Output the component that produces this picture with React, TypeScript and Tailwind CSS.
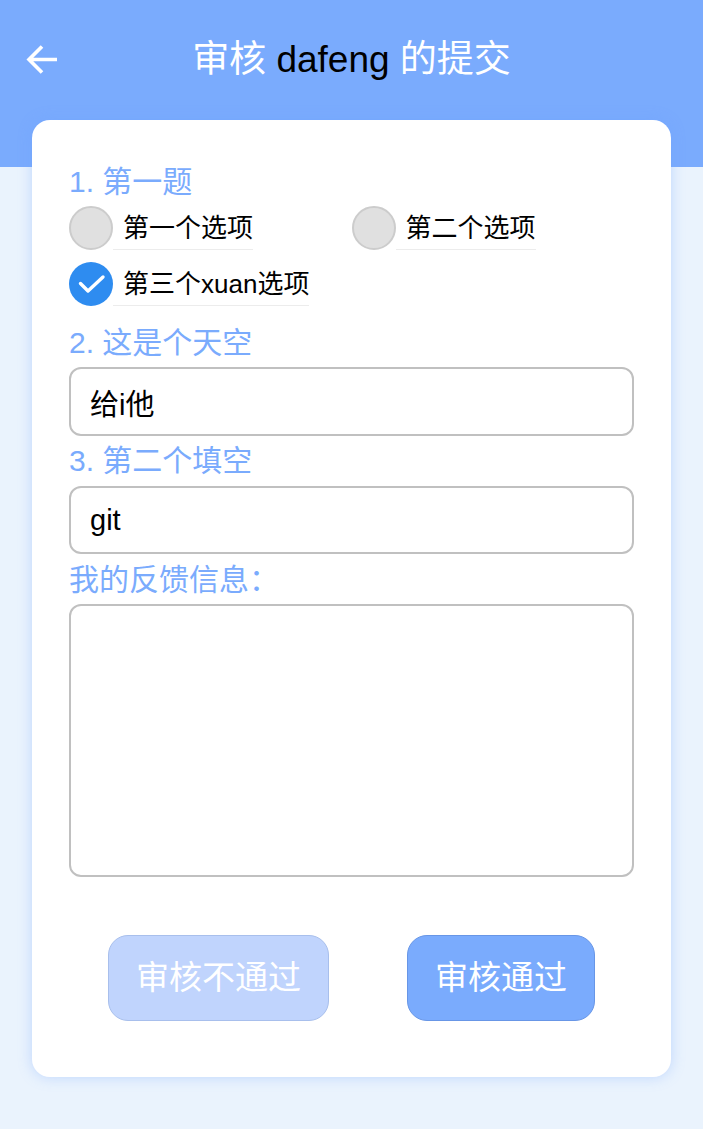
import React, { useState } from 'react';

const font = { fontFamily: '"Liberation Sans", "Noto Sans CJK SC", sans-serif' };

const options = ['第一个选项', '第二个选项', '第三个xuan选项'];

function Radio({ label, checked }: { label: string; checked: boolean }) {
  return (
    <div className="flex items-center h-[44px]">
      {checked ? (
        <span className="w-[44px] h-[44px] rounded-full bg-[#2e8cf0] shrink-0">
          <svg width="44" height="44" viewBox="0 0 44 44" fill="none">
            <path d="M11.5 21.5l7.5 7.5 15-14" stroke="#fff" strokeWidth="3.4" strokeLinecap="round" strokeLinejoin="round" />
          </svg>
        </span>
      ) : (
        <span className="w-[44px] h-[44px] rounded-full bg-[#e0e0e0] border-2 border-[#cccccc] shrink-0" />
      )}
      <span className="self-stretch flex items-center pl-[10px] border-b border-[#ececec] text-[26px] text-black leading-none">
        {label}
      </span>
    </div>
  );
}

export default function App() {
  const [blank1, setBlank1] = useState('给i他');
  const [blank2, setBlank2] = useState('git');
  const [feedback, setFeedback] = useState('');

  return (
    <div className="min-h-[1129px] bg-[#eaf3fd]" style={font}>
      <div className="h-[167px] bg-[#7aabfd]">
        <div className="h-[120px] flex items-center relative">
          <button className="absolute left-[26px] top-[44px]">
            <svg width="33" height="31" viewBox="0 0 33 31" fill="none">
              <path d="M31 15.5H3M16 2.5L3 15.5L16 28.5" stroke="#fff" strokeWidth="3.6" strokeLinejoin="miter" />
            </svg>
          </button>
          <h1 className="w-full text-center text-[37px] text-white font-normal">
            审核 <span className="text-black">dafeng</span> 的提交
          </h1>
        </div>
      </div>

      <div className="mx-[32px] -mt-[47px] bg-white rounded-[18px] shadow-[0_0_14px_rgba(110,160,255,0.35)] pt-[47px] pb-[56px] px-[37px]">
        <p className="text-[30px] leading-[30px] text-[#7aabfd]">1. 第一题</p>
        <div className="grid grid-cols-2 gap-y-[12px] mt-[9px]">
          {options.map((o, i) => (
            <div key={o} className="flex">
              <Radio label={o} checked={i === 2} />
            </div>
          ))}
        </div>

        <p className="text-[30px] leading-[30px] text-[#7aabfd] mt-[22px]">2. 这是个天空</p>
        <input
          value={blank1}
          onChange={(e) => setBlank1(e.target.value)}
          className="mt-[9px] w-full h-[69px] border-2 border-[#c0c0c0] rounded-[12px] px-[19px] text-[29px] text-black outline-none"
        />

        <p className="text-[30px] leading-[30px] text-[#7aabfd] mt-[10px]">3. 第二个填空</p>
        <input
          value={blank2}
          onChange={(e) => setBlank2(e.target.value)}
          className="mt-[10px] w-full h-[68px] border-2 border-[#c0c0c0] rounded-[12px] px-[19px] text-[29px] text-black outline-none"
        />

        <p className="text-[30px] leading-[30px] text-[#7aabfd] mt-[11px]">我的反馈信息：</p>
        <textarea
          value={feedback}
          onChange={(e) => setFeedback(e.target.value)}
          className="mt-[9px] block w-full h-[273px] border-2 border-[#c0c0c0] rounded-[12px] p-[16px] text-[26px] outline-none resize-none"
        />

        <div className="flex justify-around mt-[58px]">
          <button className="h-[86px] px-[27px] rounded-[20px] bg-[#c0d4fd] border border-[#a8bfec] text-white text-[33px]">
            审核不通过
          </button>
          <button className="h-[86px] px-[27px] rounded-[20px] bg-[#7aabfd] border border-[#6896e6] text-white text-[33px]">
            审核通过
          </button>
        </div>
      </div>
    </div>
  );
}
